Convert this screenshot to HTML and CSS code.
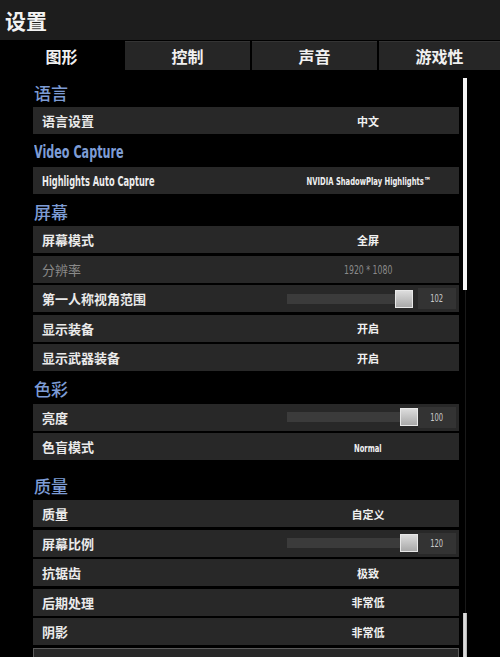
FILE: index.html
```html
<!DOCTYPE html>
<html lang="zh-CN">
<head>
<meta charset="utf-8">
<title>设置</title>
<link rel="stylesheet" href="styles.css">
</head>
<body>
<div class="app">
  <header class="titlebar"><h1 class="title">设置</h1></header>
  <nav class="tabs">
    <div class="tab active">图形</div>
    <div class="tab">控制</div>
    <div class="tab">声音</div>
    <div class="tab">游戏性</div>
  </nav>
  <main class="content">
    <div class="list">
      <section class="group">
        <h2 class="group-title">语言</h2>
        <div class="row"><span class="label">语言设置</span><span class="value">中文</span></div>
      </section>
      <section class="group">
        <h2 class="group-title"><span class="cond head-cond">Video Capture</span></h2>
        <div class="row"><span class="label"><span class="cond label-cond">Highlights Auto Capture</span></span><span class="value"><span class="cond value-cond">NVIDIA ShadowPlay Highlights™</span></span></div>
      </section>
      <section class="group">
        <h2 class="group-title">屏幕</h2>
        <div class="row"><span class="label">屏幕模式</span><span class="value">全屏</span></div>
        <div class="row disabled"><span class="label">分辨率</span><span class="value"><span class="cond num-cond">1920 * 1080</span></span></div>
        <div class="row"><span class="label">第一人称视角范围</span>
          <div class="slider"><div class="track"><div class="fill" style="width:124px"></div><div class="thumb" style="left:108px"></div></div><div class="valbox"><span class="cond box-cond">102</span></div></div>
        </div>
        <div class="row"><span class="label">显示装备</span><span class="value">开启</span></div>
        <div class="row"><span class="label">显示武器装备</span><span class="value">开启</span></div>
      </section>
      <section class="group">
        <h2 class="group-title">色彩</h2>
        <div class="row"><span class="label">亮度</span>
          <div class="slider"><div class="track"><div class="fill" style="width:128px"></div><div class="thumb" style="left:113px"></div></div><div class="valbox"><span class="cond box-cond">100</span></div></div>
        </div>
        <div class="row"><span class="label">色盲模式</span><span class="value"><span class="cond value-cond">Normal</span></span></div>
      </section>
      <section class="group quality">
        <h2 class="group-title">质量</h2>
        <div class="row"><span class="label">质量</span><span class="value">自定义</span></div>
        <div class="row"><span class="label">屏幕比例</span>
          <div class="slider"><div class="track"><div class="fill" style="width:128px"></div><div class="thumb" style="left:113px"></div></div><div class="valbox"><span class="cond box-cond">120</span></div></div>
        </div>
        <div class="row"><span class="label">抗锯齿</span><span class="value">极致</span></div>
        <div class="row"><span class="label">后期处理</span><span class="value">非常低</span></div>
        <div class="row"><span class="label">阴影</span><span class="value">非常低</span></div>
        <div class="row selected"></div>
      </section>
    </div>
    <div class="scrollbar">
      <div class="sb-thumb sb-top"></div>
      <div class="sb-line"></div>
      <div class="sb-thumb sb-bottom"></div>
    </div>
  </main>
</div>
</body>
</html>
```
FILE: styles.css
```css
html, body {
  margin: 0;
  padding: 0;
  background: #000;
  width: 500px;
  height: 657px;
  overflow: hidden;
}
body {
  font-family: "Noto Sans CJK SC", "Noto Sans", sans-serif;
  color: #e8e8e8;
}
.app {
  width: 500px;
  height: 657px;
  display: flex;
  flex-direction: column;
}
.titlebar {
  height: 40px;
  background: #1d1d1d;
  display: flex;
  align-items: center;
  padding-left: 5px;
  flex: none;
}
.title {
  margin: 0;
  font-size: 21px;
  font-weight: 700;
  line-height: 1;
  color: #f2f2f2;
}
.tabs {
  flex: none;
  margin-top: 1px;
  height: 29px;
  display: grid;
  grid-template-columns: 123px 125px 125px 1fr;
  column-gap: 2px;
}
.tab {
  background: #262626;
  border-top: 1px solid #343434;
  box-sizing: border-box;
  display: flex;
  align-items: center;
  justify-content: center;
  font-size: 16px;
  font-weight: 700;
  color: #f0f0f0;
}
.tab.active {
  background: #000;
  border-top-color: #000;
}
.content {
  flex: 1;
  display: flex;
  padding: 7px 0 0 33px;
  overflow: hidden;
}
.list {
  width: 426px;
  flex: none;
}
.group.quality {
  margin-top: 10px;
}
.group-title {
  margin: 0;
  height: 30px;
  display: flex;
  align-items: center;
  padding-left: 1px;
  font-size: 17px;
  font-weight: 500;
  color: #7d9cd5;
}
.cond {
  display: inline-block;
  font-family: "DejaVu Sans Condensed", "Liberation Sans", sans-serif;
  font-weight: 700;
  transform: scaleX(0.75);
  white-space: nowrap;
}
.head-cond {
  font-size: 18px;
  font-weight: 600;
  transform: scaleX(0.69);
  transform-origin: left center;
  color: #7d9cd5;
}
.label-cond {
  font-size: 13.5px;
  transform: scaleX(0.68);
  transform-origin: left center;
  color: #ececec;
}
.value-cond {
  font-size: 10.8px;
  transform: scaleX(0.7);
  transform-origin: center center;
}
.num-cond {
  font-size: 11.5px;
  font-weight: 400;
  color: #8a8a8a;
  transform-origin: center center;
}
.box-cond {
  font-size: 10px;
  font-weight: 400;
  color: #c8c8c8;
}
.row {
  height: 27px;
  margin-bottom: 2.5px;
  background: #282828;
  box-sizing: border-box;
  display: grid;
  grid-template-columns: 1fr 176px;
  align-items: center;
  padding-right: 3px;
}
.row.selected {
  border: 1px solid #5a5a5a;
  border-bottom: none;
}
.label {
  padding-left: 9px;
  font-size: 13px;
  font-weight: 700;
  color: #eaeaea;
  white-space: nowrap;
}
.value {
  text-align: center;
  font-size: 11px;
  font-weight: 700;
  color: #f0f0f0;
  white-space: nowrap;
}
.row.disabled .label {
  color: #8a8a8a;
  font-weight: 400;
}
.slider {
  display: flex;
  align-items: center;
  padding-left: 7px;
}
.track {
  position: relative;
  width: 130px;
  height: 10px;
}
.fill {
  height: 10px;
  background: #3b3b3b;
}
.thumb {
  position: absolute;
  top: -4px;
  width: 18px;
  height: 18px;
  box-sizing: border-box;
  border: 1px solid #e8e8e8;
  background: linear-gradient(#dcdcdc, #a9a9a9);
}
.valbox {
  margin-left: 1px;
  width: 38px;
  height: 21px;
  background: #333;
  display: flex;
  align-items: center;
  justify-content: center;
}
.scrollbar {
  flex: none;
  margin-left: 4px;
  margin-top: 1px;
  width: 4px;
  display: flex;
  flex-direction: column;
  align-items: center;
}
.sb-thumb {
  width: 4px;
  flex: none;
}
.sb-top {
  height: 212px;
  background: #f4f4f4;
}
.sb-line {
  width: 1px;
  height: 323px;
  background: #191919;
  flex: none;
}
.sb-bottom {
  height: 60px;
  background: linear-gradient(90deg, #bcbcbc, #e6e6e6 50%, #a8a8a8);
}
```
